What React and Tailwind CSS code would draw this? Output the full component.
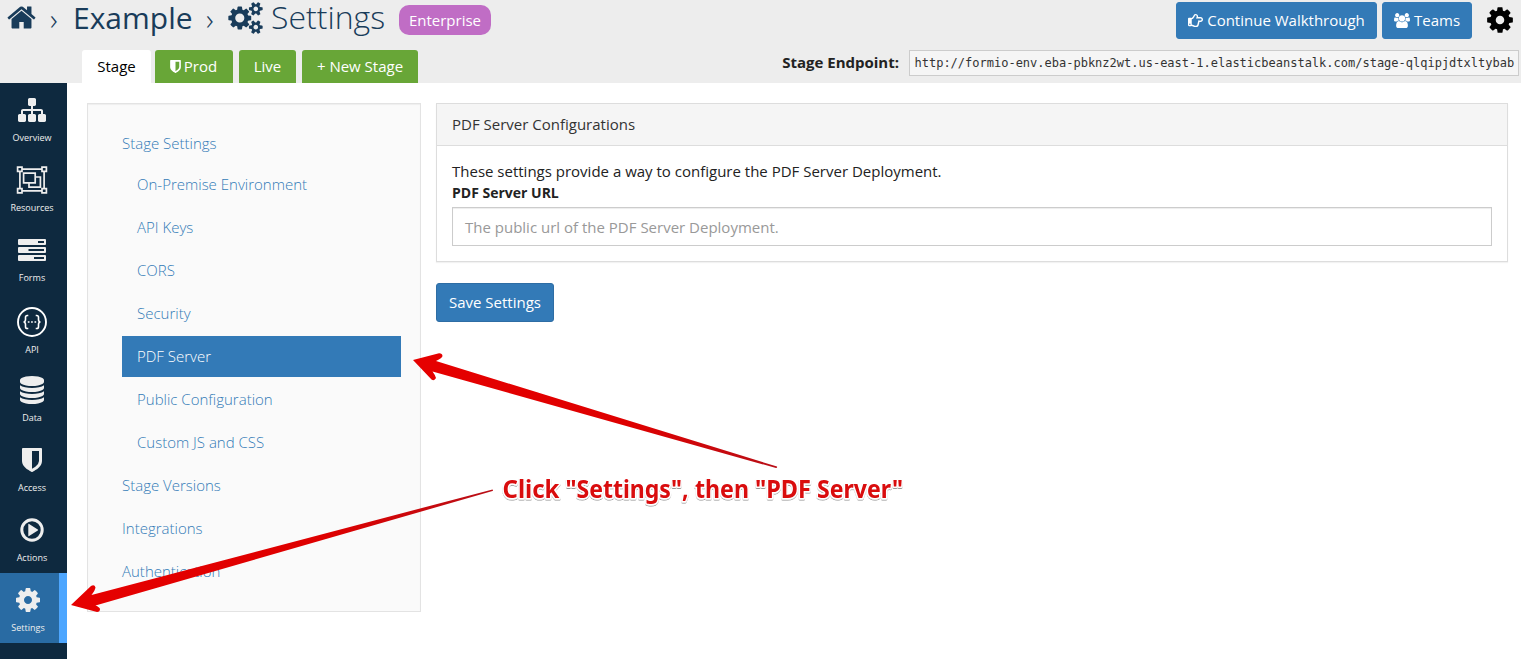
import React from 'react';
import { FaRegHandPointRight } from 'react-icons/fa';

const COG = 'M1152 896q0-106-75-181t-181-75-181 75-75 181 75 181 181 75 181-75 75-181zm512-109v222q0 12-8 23t-20 13l-185 28q-19 54-39 91 35 50 107 138 10 12 10 25t-9 23q-27 37-99 108t-94 71q-12 0-26-9l-138-108q-44 23-91 38-16 136-29 186-7 28-36 28h-222q-14 0-24.5-8.5t-11.5-21.5l-28-184q-49-16-90-37l-141 107q-10 9-25 9-14 0-25-11-126-114-165-168-7-10-7-23 0-12 8-23 15-21 51-66.5t54-70.5q-27-50-41-99l-183-27q-13-2-21-12.5t-8-23.5v-222q0-12 8-23t19-13l186-28q14-46 39-92-40-57-107-138-10-12-10-24 0-10 9-23 26-36 98.5-107.5t94.5-71.5q13 0 26 10l138 107q44-23 91-38 16-136 29-186 7-28 36-28h222q14 0 24.5 8.5t11.5 21.5l28 184q49 16 90 37l142-107q9-9 24-9 13 0 25 10 129 119 165 170 7 8 7 22 0 12-8 23-15 21-51 66.5t-54 70.5q26 50 41 98l183 28q13 2 21 12.5t8 23.5z';
const COGS = 'M896 896q0-106-75-181t-181-75-181 75-75 181 75 181 181 75 181-75 75-181zm768 512q0-52-38-90t-90-38-90 38-38 90q0 53 37.5 90.5t90.5 37.5 90.5-37.5 37.5-90.5zm0-1024q0-52-38-90t-90-38-90 38-38 90q0 53 37.5 90.5t90.5 37.5 90.5-37.5 37.5-90.5zm-384 421v185q0 10-7 19.5t-16 10.5l-155 24q-11 35-32 76 34 48 90 115 7 10 7 20 0 12-7 19-23 30-82.5 89.5t-78.5 59.5q-11 0-21-7l-115-90q-37 19-77 31-11 108-23 155-7 24-30 24h-186q-11 0-20-7.5t-10-17.5l-23-153q-34-10-75-31l-118 89q-7 7-20 7-11 0-21-8-144-133-144-160 0-9 7-19 10-14 41-53t47-61q-23-44-35-82l-152-24q-10-1-17-9.5t-7-19.5v-185q0-10 7-19.5t16-10.5l155-24q11-35 32-76-34-48-90-115-7-11-7-20 0-12 7-20 22-30 82-89t79-59q11 0 21 7l115 90q34-18 77-32 11-108 23-154 7-24 30-24h186q11 0 20 7.5t10 17.5l23 153q34 10 75 31l118-89q8-7 20-7 11 0 21 8 144 133 144 160 0 9-7 19-12 16-42 54t-45 60q23 48 34 82l152 23q10 2 17 10.5t7 19.5zm640 533v140q0 16-149 31-12 27-30 52 51 113 51 138 0 4-4 7-122 71-124 71-8 0-46-47t-52-68q-20 2-30 2t-30-2q-14 21-52 68t-46 47q-2 0-124-71-4-3-4-7 0-25 51-138-18-25-30-52-149-15-149-31v-140q0-16 149-31 13-29 30-52-51-113-51-138 0-4 4-7 4-2 35-20t59-34 30-16q8 0 46 46.5t52 67.5q20-2 30-2t30 2q51-71 92-112l6-2q4 0 124 70 4 3 4 7 0 25-51 138 17 23 30 52 149 15 149 31zm0-1024v140q0 16-149 31-12 27-30 52 51 113 51 138 0 4-4 7-122 71-124 71-8 0-46-47t-52-68q-20 2-30 2t-30-2q-14 21-52 68t-46 47q-2 0-124-71-4-3-4-7 0-25 51-138-18-25-30-52-149-15-149-31v-140q0-16 149-31 13-29 30-52-51-113-51-138 0-4 4-7 4-2 35-20t59-34 30-16q8 0 46 46.5t52 67.5q20-2 30-2t30 2q51-71 92-112l6-2q4 0 124 70 4 3 4 7 0 25-51 138 17 23 30 52 149 15 149 31z';
const HOME = 'M1472 992v480q0 26-19 45t-45 19h-384v-384h-256v384h-384q-26 0-45-19t-19-45v-480q0-1 .5-3t.5-3l575-474 575 474q1 2 1 6zm223-69l-62 74q-8 9-21 11h-3q-13 0-21-7l-692-577-692 577q-12 8-24 7-13-2-21-11l-62-74q-8-10-7-23.5t11-21.5l719-599q32-26 76-26t76 26l244 204v-195q0-14 9-23t23-9h192q14 0 23 9t9 23v408l219 182q10 8 11 21.5t-7 23.5z';
const SITEMAP = 'M1792 1248v320q0 40-28 68t-68 28h-320q-40 0-68-28t-28-68v-320q0-40 28-68t68-28h96v-192h-512v192h96q40 0 68 28t28 68v320q0 40-28 68t-68 28h-320q-40 0-68-28t-28-68v-320q0-40 28-68t68-28h96v-192h-512v192h96q40 0 68 28t28 68v320q0 40-28 68t-68 28h-320q-40 0-68-28t-28-68v-320q0-40 28-68t68-28h96v-192q0-52 38-90t90-38h512v-192h-96q-40 0-68-28t-28-68v-320q0-40 28-68t68-28h320q40 0 68 28t28 68v320q0 40-28 68t-68 28h-96v192h512q52 0 90 38t38 90v192h96q40 0 68 28t28 68z';
const DATABASE = 'M896 768q237 0 443-43t325-127v170q0 69-103 128t-280 93.5-385 34.5-385-34.5-280-93.5-103-128v-170q119 84 325 127t443 43zm0 768q237 0 443-43t325-127v170q0 69-103 128t-280 93.5-385 34.5-385-34.5-280-93.5-103-128v-170q119 84 325 127t443 43zm0-384q237 0 443-43t325-127v170q0 69-103 128t-280 93.5-385 34.5-385-34.5-280-93.5-103-128v-170q119 84 325 127t443 43zm0-1152q208 0 385 34.5t280 93.5 103 128v128q0 69-103 128t-280 93.5-385 34.5-385-34.5-280-93.5-103-128v-128q0-69 103-128t280-93.5 385-34.5z';
const SHIELD = 'M1344 960v-640h-448v1137q119-63 213-137 235-184 235-360zm192-768v768q0 86-33.5 170.5t-83 150-118 127.5-126.5 103-121 77.5-89.5 49.5-42.5 20q-12 6-26 6t-26-6q-16-7-42.5-20t-89.5-49.5-121-77.5-126.5-103-118-127.5-83-150-33.5-170.5v-768q0-26 19-45t45-19h1152q26 0 45 19t19 45z';
const USERS = 'M593 896q-162 5-265 128h-134q-82 0-138-40.5t-56-118.5q0-353 124-353 6 0 43.5 21t97.5 42.5 119 21.5q67 0 133-23-5 37-5 66 0 139 81 256zm1071 637q0 120-73 189.5t-194 69.5h-874q-121 0-194-69.5t-73-189.5q0-53 3.5-103.5t14-109 26.5-108.5 43-97.5 62-81 85.5-53.5 111.5-20q10 0 43 21.5t73 48 107 48 135 21.5 135-21.5 107-48 73-48 43-21.5q61 0 111.5 20t85.5 53.5 62 81 43 97.5 26.5 108.5 14 109 3.5 103.5zm-1024-1277q0 106-75 181t-181 75-181-75-75-181 75-181 181-75 181 75 75 181zm704 384q0 159-112.5 271.5t-271.5 112.5-271.5-112.5-112.5-271.5 112.5-271.5 271.5-112.5 271.5 112.5 112.5 271.5zm576 225q0 78-56 118.5t-138 40.5h-134q-103-123-265-128 81-117 81-256 0-29-5-66 66 23 133 23 59 0 119-21.5t97.5-42.5 43.5-21q124 0 124 353zm-128-609q0 106-75 181t-181 75-181-75-75-181 75-181 181-75 181 75 75 181z';

function Glyph({ d, box = '0 0 1792 1792', className }) {
  return (
    <svg viewBox={box} fill="currentColor" className={`shrink-0 ${className}`}>
      <path d={d} />
    </svg>
  );
}

function GroupIcon() {
  return (
    <svg viewBox="0 0 32 28" className="h-7 w-8" fill="none" stroke="currentColor" strokeWidth="1.7">
      <path d="M6 3.2h20M6 24.8h20M3.9 5.5v17M28.1 5.5v17" />
      <path d="M1.6 1.1h4.4v4.2H1.6zM26 1.1h4.4v4.2H26zM1.6 22.7h4.4v4.2H1.6zM26 22.7h4.4v4.2H26z" />
      <path d="M7.6 7.2h11.6v9.6H7.6zM19.2 11h5.2v10.2H13v-4.4" />
    </svg>
  );
}

function ServerIcon() {
  return (
    <svg viewBox="0 0 28 22" className="h-[22px] w-7">
      <g fill="currentColor">
        <rect width="28" height="6" y="0" rx="1" />
        <rect width="28" height="6" y="8" rx="1" />
        <rect width="28" height="6" y="16" rx="1" />
      </g>
      <path d="M20 3h6M10.500 11h15.500M16 19h10" stroke="#0e293f" strokeWidth="2" />
    </svg>
  );
}

function ApiIcon() {
  return (
    <svg viewBox="0 0 32 32" className="h-8 w-8" fill="none" stroke="#fff">
      <circle cx="16" cy="16" r="14" strokeWidth="1.900" />
      <path strokeWidth="1.600" d="M12.300 9.500h-1q-1.800 0-1.800 1.800v2.200q0 2.300-1.900 2.500 1.900.2 1.900 2.500v2.200q0 1.800 1.800 1.800h1M19.700 9.500h1q1.800 0 1.800 1.800v2.200q0 2.300 1.900 2.500-1.900.2-1.900 2.500v2.200q0 1.800-1.800 1.800h-1" />
      <path strokeWidth="1.700" d="M11.800 16h1.700M15.100 16h1.700M18.500 16h1.700" />
    </svg>
  );
}

function PlayIcon() {
  return (
    <svg viewBox="0 0 24 24" className="h-6 w-6">
      <circle cx="12" cy="12" r="10.200" fill="none" stroke="currentColor" strokeWidth="3" />
      <path d="M8.300 6.400q0-.9.800-.4l8.700 5.400q.7.600 0 1.200l-8.700 5.400q-.8.500-.8-.4z" fill="currentColor" />
    </svg>
  );
}

const NAV = [
  { label: 'Overview', icon: <Glyph d={SITEMAP} className="size-7" /> },
  { label: 'Resources', icon: <GroupIcon /> },
  { label: 'Forms', icon: <ServerIcon /> },
  { label: 'API', icon: <ApiIcon />, api: true },
  { label: 'Data', icon: <Glyph d={DATABASE} className="size-7" /> },
  { label: 'Access', icon: <Glyph d={SHIELD} className="size-7" /> },
  { label: 'Actions', icon: <PlayIcon /> },
  { label: 'Settings', icon: <Glyph d={COG} className="size-7" />, active: true },
];

function Sidebar() {
  return (
    <nav className="flex w-[67px] shrink-0 flex-col bg-[#0e293f] text-[#eee]">
      {NAV.map((n) => (
        <a
          key={n.label}
          className={`flex flex-col items-center ${n.api ? 'h-[72px]' : n.label === 'Data' ? 'h-[68px]' : 'h-[70px]'} ${
            n.active ? 'border-r-8 border-[#4da6ff] bg-[#296ba3] pr-[3px]' : 'pr-[3px]'
          }`}
        >
          <span className={`flex h-7 items-center justify-center ${n.api ? 'mt-[15px]' : n.label === 'Data' ? 'mt-[11px]' : 'mt-[13px]'}`}>{n.icon}</span>
          <span className="mt-[7px] text-[9px] leading-[14px]">{n.label}</span>
        </a>
      ))}
    </nav>
  );
}

function Header() {
  return (
    <header className="flex h-[83px] flex-col bg-[#ededed]">
      <div className="flex h-[50px] justify-between pr-1.5 pl-[6px]">
        <div className="flex h-10 items-center leading-9 text-[#193c5a]">
          <Glyph d={HOME} className="mb-1.5 size-[31px]" />
          <span className="mb-0.5 ml-[13px] w-[23px] text-[30px] font-light">›</span>
          <span className="mb-1 w-[133px] text-[30px]">Example</span>
          <span className="mb-0.5 w-[22px] text-[30px] font-light">›</span>
          <Glyph d={COGS} box="0 0 1920 1792" className="mb-1 h-8 w-[35px]" />
          <span className="mb-1.5 ml-[8px] w-[128px] text-[32px] font-light">Settings</span>
          <span className="flex h-[30px] w-[92px] items-center justify-center rounded-[10px] bg-[#c06dc5] text-[15px] text-white">Enterprise</span>
        </div>
        <div className="flex items-start pt-[2px] text-[15px] text-white">
          <button className="flex h-[37px] w-[201px] items-center justify-center gap-[4px] rounded-[3px] border border-[#337ab7] bg-[#337ab7]">
            <FaRegHandPointRight className="size-[15px]" />
            Continue Walkthrough
          </button>
          <button className="ml-[5px] flex h-[37px] w-[90px] items-center justify-center gap-[4px] rounded-[3px] border border-[#337ab7] bg-[#337ab7]">
            <Glyph d={USERS} box="0 0 1920 1792" className="h-[15px] w-4" />
            Teams
          </button>
          <Glyph d={COG} className="ml-[13px] mt-[3px] size-[30px] text-black" />
        </div>
      </div>
      <div className="flex h-[33px] justify-between pr-[2px] pl-[82px] text-[15px] text-white">
        <div className="flex">
          <span className="flex w-[69px] items-center justify-center rounded-t-[3px] bg-white text-black">Stage</span>
          <span className="ml-1 flex w-[78px] items-center justify-center gap-[1px] rounded-t-[3px] bg-[#68a637] pr-[3px]">
            <Glyph d={SHIELD} className="size-[15px]" />
            Prod
          </span>
          <span className="ml-1.5 flex w-[57px] items-center justify-center rounded-t-[3px] bg-[#68a637]">Live</span>
          <span className="ml-1.5 flex w-[116px] items-center justify-center rounded-t-[3px] bg-[#68a637]">+ New Stage</span>
        </div>
        <div className="flex h-[26px] items-center">
          <span className="mb-0.5 text-[15px] font-bold text-[#222]">Stage Endpoint:</span>
          <span className="ml-[10px] flex h-[26px] w-[610px] items-center border border-[#ccc] bg-[#f5f5f5] pl-[4.5px] font-['DejaVu_Sans_Mono',monospace] text-[12px] text-[#333]">
            http://formio-env.eba-pbknz2wt.us-east-1.elasticbeanstalk.com/stage-qlqipjdtxltybab
          </span>
        </div>
      </div>
    </header>
  );
}

const MENU = [
  { t: 'On-Premise Environment', sub: true },
  { t: 'API Keys', sub: true },
  { t: 'CORS', sub: true },
  { t: 'Security', sub: true },
  { t: 'PDF Server', sub: true, active: true },
  { t: 'Public Configuration', sub: true },
  { t: 'Custom JS and CSS', sub: true },
  { t: 'Stage Versions' },
  { t: 'Integrations' },
  { t: 'Authentication' },
];

function SettingsMenu() {
  return (
    <aside className="flex h-[509px] w-[334px] shrink-0 flex-col border border-[#e3e3e3] bg-[#fafafa] pt-[28px] pr-[19px] pl-[34px] text-[15px] font-light text-[#337ab7] shadow-[inset_0_1px_1px_rgba(0,0,0,0.05)]">
      <a className="leading-[22px]">Stage Settings</a>
      <div className="mt-[10px] flex flex-col gap-[2px]">
        {MENU.map((m) => (
          <a key={m.t} className={`flex h-[41px] items-center ${m.sub ? 'pl-[15px]' : ''} ${m.active ? 'bg-[#337ab7] text-white' : ''}`}>
            {m.t}
          </a>
        ))}
      </div>
    </aside>
  );
}

function Annotations() {
  return (
    <svg className="pointer-events-none absolute inset-0 h-[659px] w-[1521px]" viewBox="0 0 1521 659">
      <defs>
        <filter id="halo" x="-5%" y="-30%" width="110%" height="170%">
          <feDropShadow dx="0" dy="1" stdDeviation="0.7" floodColor="#000" floodOpacity="0.4" />
        </filter>
        <linearGradient id="red1" x1="0" x2="1" y1="0" y2="0">
          <stop offset="0" stopColor="#e60000" />
          <stop offset="0.6" stopColor="#de0000" />
          <stop offset="1" stopColor="#b80f17" />
        </linearGradient>
      </defs>
      <g fill="url(#red1)">
        <path d="M413 360L439 353.300Q442.300 353.200 442.500 356Q442.400 358 436 361L777 466.600Q777.500 467.800 776 468L432.500 371.500Q435.500 375.500 436 378Q434.500 381.300 431.500 379.500Z" />
        <path d="M71 605L91 586Q94.500 584 95.500 587.500Q95 590.500 91.500 595L492.500 489.400Q493.500 490.300 492.500 491L95.500 605.500Q99.500 607 100 609Q100 612 97 612Z" />
      </g>
      <g filter="url(#halo)">
        <text y="498" className="font-['Noto_Sans','Open_Sans',sans-serif] text-[25px] font-bold" fill="#d9080d" stroke="#fff" strokeWidth="3" strokeLinejoin="round" paintOrder="stroke">
          <tspan x="502.500" textLength="57" lengthAdjust="spacingAndGlyphs">Click</tspan>{' '}
          <tspan x="565.500" textLength="123" lengthAdjust="spacingAndGlyphs">"Settings",</tspan>{' '}
          <tspan x="695" textLength="54" lengthAdjust="spacingAndGlyphs">then</tspan>{' '}
          <tspan x="755" textLength="56" lengthAdjust="spacingAndGlyphs">"PDF</tspan>{' '}
          <tspan x="817" textLength="86" lengthAdjust="spacingAndGlyphs">Server"</tspan>
        </text>
      </g>
    </svg>
  );
}

export default function App() {
  return (
    <div className="relative flex h-[659px] w-[1521px] flex-col overflow-hidden bg-white font-['Open_Sans',sans-serif]">
      <Header />
      <div className="flex grow">
        <Sidebar />
        <main className="flex grow items-start gap-[15px] pt-5 pr-[13px] pl-5">
          <SettingsMenu />
          <section className="flex grow flex-col items-start text-[15px] text-[#222]">
            <div className="flex w-full flex-col border border-[#ddd] shadow-[0_1px_1px_rgba(0,0,0,0.05)]">
              <div className="flex h-[42px] items-center border-b border-[#ddd] bg-[#f5f5f5] px-[15px] text-[#333]">PDF Server Configurations</div>
              <div className="flex flex-col px-[15px] pt-[14px] pb-[15px]">
                <p className="leading-[22px]">These settings provide a way to configure the PDF Server Deployment.</p>
                <label className="mt-px text-[14px] leading-5 font-bold">PDF Server URL</label>
                <div className="mt-1 flex h-[39px] items-center border border-[#ccc] px-3 pt-px text-[15px] text-[#999] shadow-[inset_0_1px_1px_rgba(0,0,0,0.075)]">
                  The public url of the PDF Server Deployment.
                </div>
              </div>
            </div>
            <button className="mt-[21px] h-[39px] w-[118px] rounded-[3px] border border-[#2e6da4] bg-[#337ab7] text-[15px] text-white">Save Settings</button>
          </section>
        </main>
      </div>
      <Annotations />
    </div>
  );
}
